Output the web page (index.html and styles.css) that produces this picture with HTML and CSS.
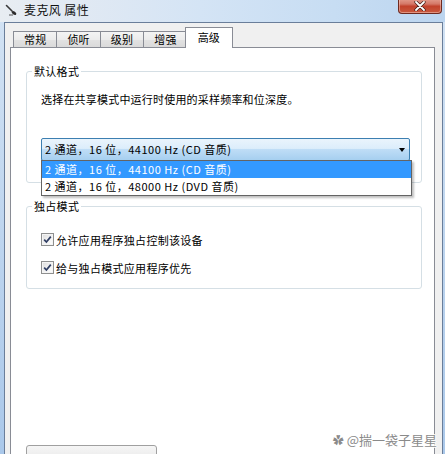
FILE: index.html
```html
<!DOCTYPE html>
<html lang="zh-CN">
<head>
<meta charset="utf-8">
<title>麦克风 属性</title>
<link rel="stylesheet" href="styles.css">
</head>
<body>
<div class="window">
  <div class="titlebar">
    <svg class="app-icon" viewBox="0 0 13 13" width="13" height="13">
      <path d="M1.5 2.5 L7 8" stroke="#3a3a3a" stroke-width="1.6" stroke-linecap="round"/>
      <ellipse cx="9" cy="10" rx="2.6" ry="1.6" fill="#2b2b2b" transform="rotate(35 9 10)"/>
      <path d="M4 12 L8 12" stroke="#555" stroke-width="1"/>
    </svg>
    <span class="title">麦克风 属性</span>
    <div class="close">
      <svg viewBox="0 0 12 10" width="12" height="10">
        <path d="M2 1 L10 9 M10 1 L2 9" stroke="#3d1a14" stroke-width="3.2" stroke-linecap="round"/>
        <path d="M2 1 L10 9 M10 1 L2 9" stroke="#ffffff" stroke-width="1.8" stroke-linecap="round"/>
      </svg>
    </div>
  </div>
  <div class="frame">
    <div class="client">
      <div class="tabs">
        <div class="tab">常规</div>
        <div class="tab">侦听</div>
        <div class="tab">级别</div>
        <div class="tab">增强</div>
        <div class="tab active">高级</div>
      </div>
      <div class="panel">
        <fieldset class="group group-format">
          <legend>默认格式</legend>
          <p class="desc">选择在共享模式中运行时使用的采样频率和位深度。</p>
          <div class="combo-wrap">
            <div class="combo">
              <span class="combo-text">2 通道，16 位，44100 Hz (CD 音质)</span>
              <span class="arrow"></span>
            </div>
            <ul class="list">
              <li class="item selected">2 通道，16 位，44100 Hz (CD 音质)</li>
              <li class="item">2 通道，16 位，48000 Hz (DVD 音质)</li>
            </ul>
          </div>
        </fieldset>
        <fieldset class="group group-exclusive">
          <legend>独占模式</legend>
          <label class="check first">
            <span class="box"><svg viewBox="0 0 11 11" width="11" height="11"><path d="M2.2 5.6 L4.4 8 L8.8 2.6" fill="none" stroke="#2f3e63" stroke-width="1.7"/></svg></span>
            <span>允许应用程序独占控制该设备</span>
          </label>
          <label class="check">
            <span class="box"><svg viewBox="0 0 11 11" width="11" height="11"><path d="M2.2 5.6 L4.4 8 L8.8 2.6" fill="none" stroke="#2f3e63" stroke-width="1.7"/></svg></span>
            <span>给与独占模式应用程序优先</span>
          </label>
        </fieldset>
        <button class="btn" aria-label="还原默认值"></button>
      </div>
    </div>
  </div>
  <div class="watermark"><span class="wm-icon">✿</span><span>@揣一袋子星星</span></div>
</div>
</body>
</html>
```
FILE: styles.css
```css
* { box-sizing: border-box; }
html, body { margin: 0; padding: 0; }
body {
  width: 445px;
  height: 454px;
  overflow: hidden;
  font-family: "Noto Sans CJK SC", "Noto Sans", sans-serif;
  font-size: 11px;
  color: #000;
  background: #ffffff;
}
.window {
  position: relative;
  width: 445px;
  height: 454px;
  overflow: hidden;
  display: flex;
  flex-direction: column;
  background: linear-gradient(to bottom, #d3e3f4, #aac8ea);
}
.titlebar {
  height: 22px;
  flex: none;
  display: flex;
  align-items: flex-start;
  padding-left: 5px;
  background: linear-gradient(to right, #e8edf2 0%, #e1e9f3 18%, #d4e4f5 45%, #c7ddf3 75%, #bcd5ef 100%);
}
.app-icon { margin-top: 3px; flex: none; }
.title {
  margin-left: 6px;
  font-size: 12px;
  line-height: 20px;
  letter-spacing: 0.4px;
  color: #111;
}
.close {
  margin-left: auto;
  margin-right: 3px;
  margin-top: -2px;
  width: 44px;
  height: 16px;
  border: 1px solid #6e2a20;
  border-top: none;
  border-radius: 0 0 4px 4px;
  background: linear-gradient(to bottom, #e6a394 0%, #d47767 40%, #c2412c 55%, #c95a3e 100%);
  display: flex;
  align-items: center;
  justify-content: center;
  padding-top: 1px;
  box-shadow: inset 0 0 0 1px rgba(255,220,210,0.45);
}
.frame {
  flex: 1;
  display: flex;
  padding: 0 2px 0 4px;
  min-height: 0;
}
.client {
  flex: 1;
  display: flex;
  flex-direction: column;
  min-height: 0;
  background: #f0f0f0;
  border: 1px solid #6a7e9a;
  border-bottom: none;
  padding: 0 7px 0 5px;
}
.tabs {
  flex: none;
  height: 24px;
  display: flex;
  align-items: flex-end;
  padding-left: 3px;
}
.tab {
  height: 16px;
  padding: 0 10px;
  border: 1px solid #898c95;
  border-bottom: none;
  margin-left: -1px;
  line-height: 15px;
  letter-spacing: 0.2px;
  background: linear-gradient(to bottom, #f4f4f4 0%, #ececec 50%, #e2e2e2 51%, #dadada 100%);
  color: #000;
}
.tab:first-child { margin-left: 0; }
.tab.active {
  position: relative;
  z-index: 1;
  height: 21px;
  margin-left: -3px;
  margin-bottom: -1px;
  padding: 2px 12px 0;
  background: #ffffff;
}
.panel {
  flex: 1;
  min-height: 0;
  overflow: hidden;
  display: flex;
  flex-direction: column;
  align-items: stretch;
  background: #ffffff;
  border: 1px solid #898c95;
  border-bottom: none;
  padding: 16px 12px 0 15px;
}
.group {
  flex: none;
  margin: 0;
  min-width: 0;
  border: 1px solid #d5dfe5;
  border-radius: 3px;
  padding: 0 11px 21px 14px;
}
.group legend {
  padding: 0 2px;
  margin-left: -9px;
  line-height: 14px;
  letter-spacing: 0.3px;
}
.desc {
  margin: 14px 0 0;
  line-height: 14px;
  letter-spacing: 0.2px;
}
.combo-wrap {
  position: relative;
  margin-top: 32px;
  letter-spacing: 0.5px;
}
.combo {
  height: 23px;
  border: 1px solid #3c7fb1;
  border-radius: 2px;
  background: linear-gradient(to bottom, #eaf4fc 0%, #dcedfb 45%, #bfddf6 50%, #a6cff0 100%);
  display: flex;
  align-items: center;
  justify-content: space-between;
  padding: 0 3px 0 3px;
}
.combo-text { line-height: 21px; }
.arrow {
  width: 0;
  height: 0;
  border-left: 3.5px solid transparent;
  border-right: 3.5px solid transparent;
  border-top: 4px solid #000;
  margin-right: 1px;
}
.list {
  position: absolute;
  left: 0;
  right: -2px;
  top: 22px;
  margin: 0;
  padding: 0;
  list-style: none;
  background: #ffffff;
  border: 1px solid #646464;
  box-shadow: 2px 2px 2px rgba(0,0,0,0.25);
  z-index: 2;
}
.item {
  height: 17px;
  line-height: 17px;
  padding-left: 3px;
  white-space: nowrap;
}
.item.selected {
  background: #3399ff;
  color: #ffffff;
}
.group-exclusive {
  margin-top: 16px;
  padding-bottom: 14px;
}
.check {
  display: flex;
  align-items: center;
  gap: 2px;
  height: 13px;
  margin-top: 15px;
  letter-spacing: 0.3px;
}
.check.first { margin-top: 20px; }
.box {
  width: 13px;
  height: 13px;
  flex: none;
  border: 1px solid #8e8f8f;
  background: linear-gradient(135deg, #dcdcdc 0%, #f4f4f4 60%, #ffffff 100%);
  box-shadow: inset 0 0 0 1px #f4f4f4;
  display: flex;
  align-items: center;
  justify-content: center;
}
.btn {
  flex: none;
  align-self: flex-start;
  margin-top: 156px;
  width: 131px;
  height: 23px;
  border: 1px solid #a0a0a0;
  border-radius: 3px;
  background: linear-gradient(to bottom, #f6f6f6 0%, #ececec 50%, #dedede 51%, #d6d6d6 100%);
  padding: 0;
}
.watermark {
  position: absolute;
  right: 8px;
  bottom: 7px;
  display: flex;
  align-items: center;
  gap: 3px;
  font-size: 13px;
  line-height: 14px;
  color: #8a8a8a;
  text-shadow: 0 0 1px #fff, 1px 0 0 #fff, -1px 0 0 #fff, 0 1px 0 #fff, 0 -1px 0 #fff;
}
.wm-icon { font-size: 11px; }
```
